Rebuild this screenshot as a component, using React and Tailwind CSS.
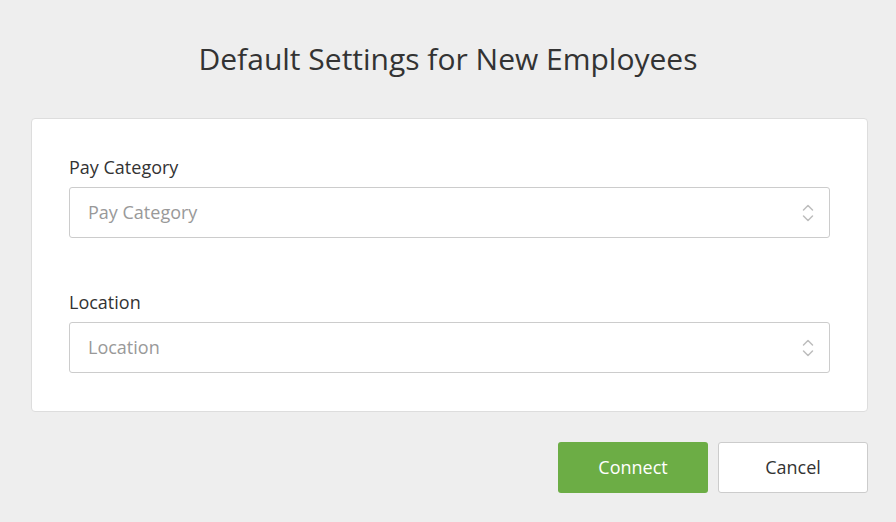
function Chevrons() {
  return (
    <svg width="12" height="20" viewBox="0 0 12 20" fill="none" stroke="#bdbdbd" strokeWidth="1.5" strokeLinecap="round" strokeLinejoin="round">
      <path d="M1.5 7 L6 2.5 L10.5 7" />
      <path d="M1.5 13 L6 17.5 L10.5 13" />
    </svg>
  )
}

function SelectField({ label, placeholder }) {
  return (
    <div>
      <label className="block text-[18px] leading-6 text-[#333333]">{label}</label>
      <div className="mt-2 flex h-[51px] items-center justify-between rounded-[3px] border border-[#cccccc] bg-white pl-[18px] pr-[15px]">
        <span className="text-[18px] text-[#999999]">{placeholder}</span>
        <Chevrons />
      </div>
    </div>
  )
}

export default function App() {
  return (
    <div className="h-[522px] bg-[#eeeeee] font-['Open_Sans',sans-serif] text-[#333333]">
      <h1 className="pt-[37px] text-center text-[30px] leading-[44px] text-[#333333]">
        Default Settings for New Employees
      </h1>
      <div className="ml-[31px] mr-[28px] mt-[37px] rounded-[4px] border border-[#dddddd] bg-white px-[37px] pt-[36px] pb-[38px]">
        <SelectField label="Pay Category" placeholder="Pay Category" />
        <div className="mt-[52px]">
          <SelectField label="Location" placeholder="Location" />
        </div>
      </div>
      <div className="mr-[28px] mt-[30px] flex justify-end gap-[10px]">
        <button className="h-[51px] w-[150px] rounded-[3px] bg-[#6cad45] text-[18px] text-white">Connect</button>
        <button className="h-[51px] w-[150px] rounded-[3px] border border-[#cccccc] bg-white text-[18px] text-[#333333]">Cancel</button>
      </div>
    </div>
  )
}
